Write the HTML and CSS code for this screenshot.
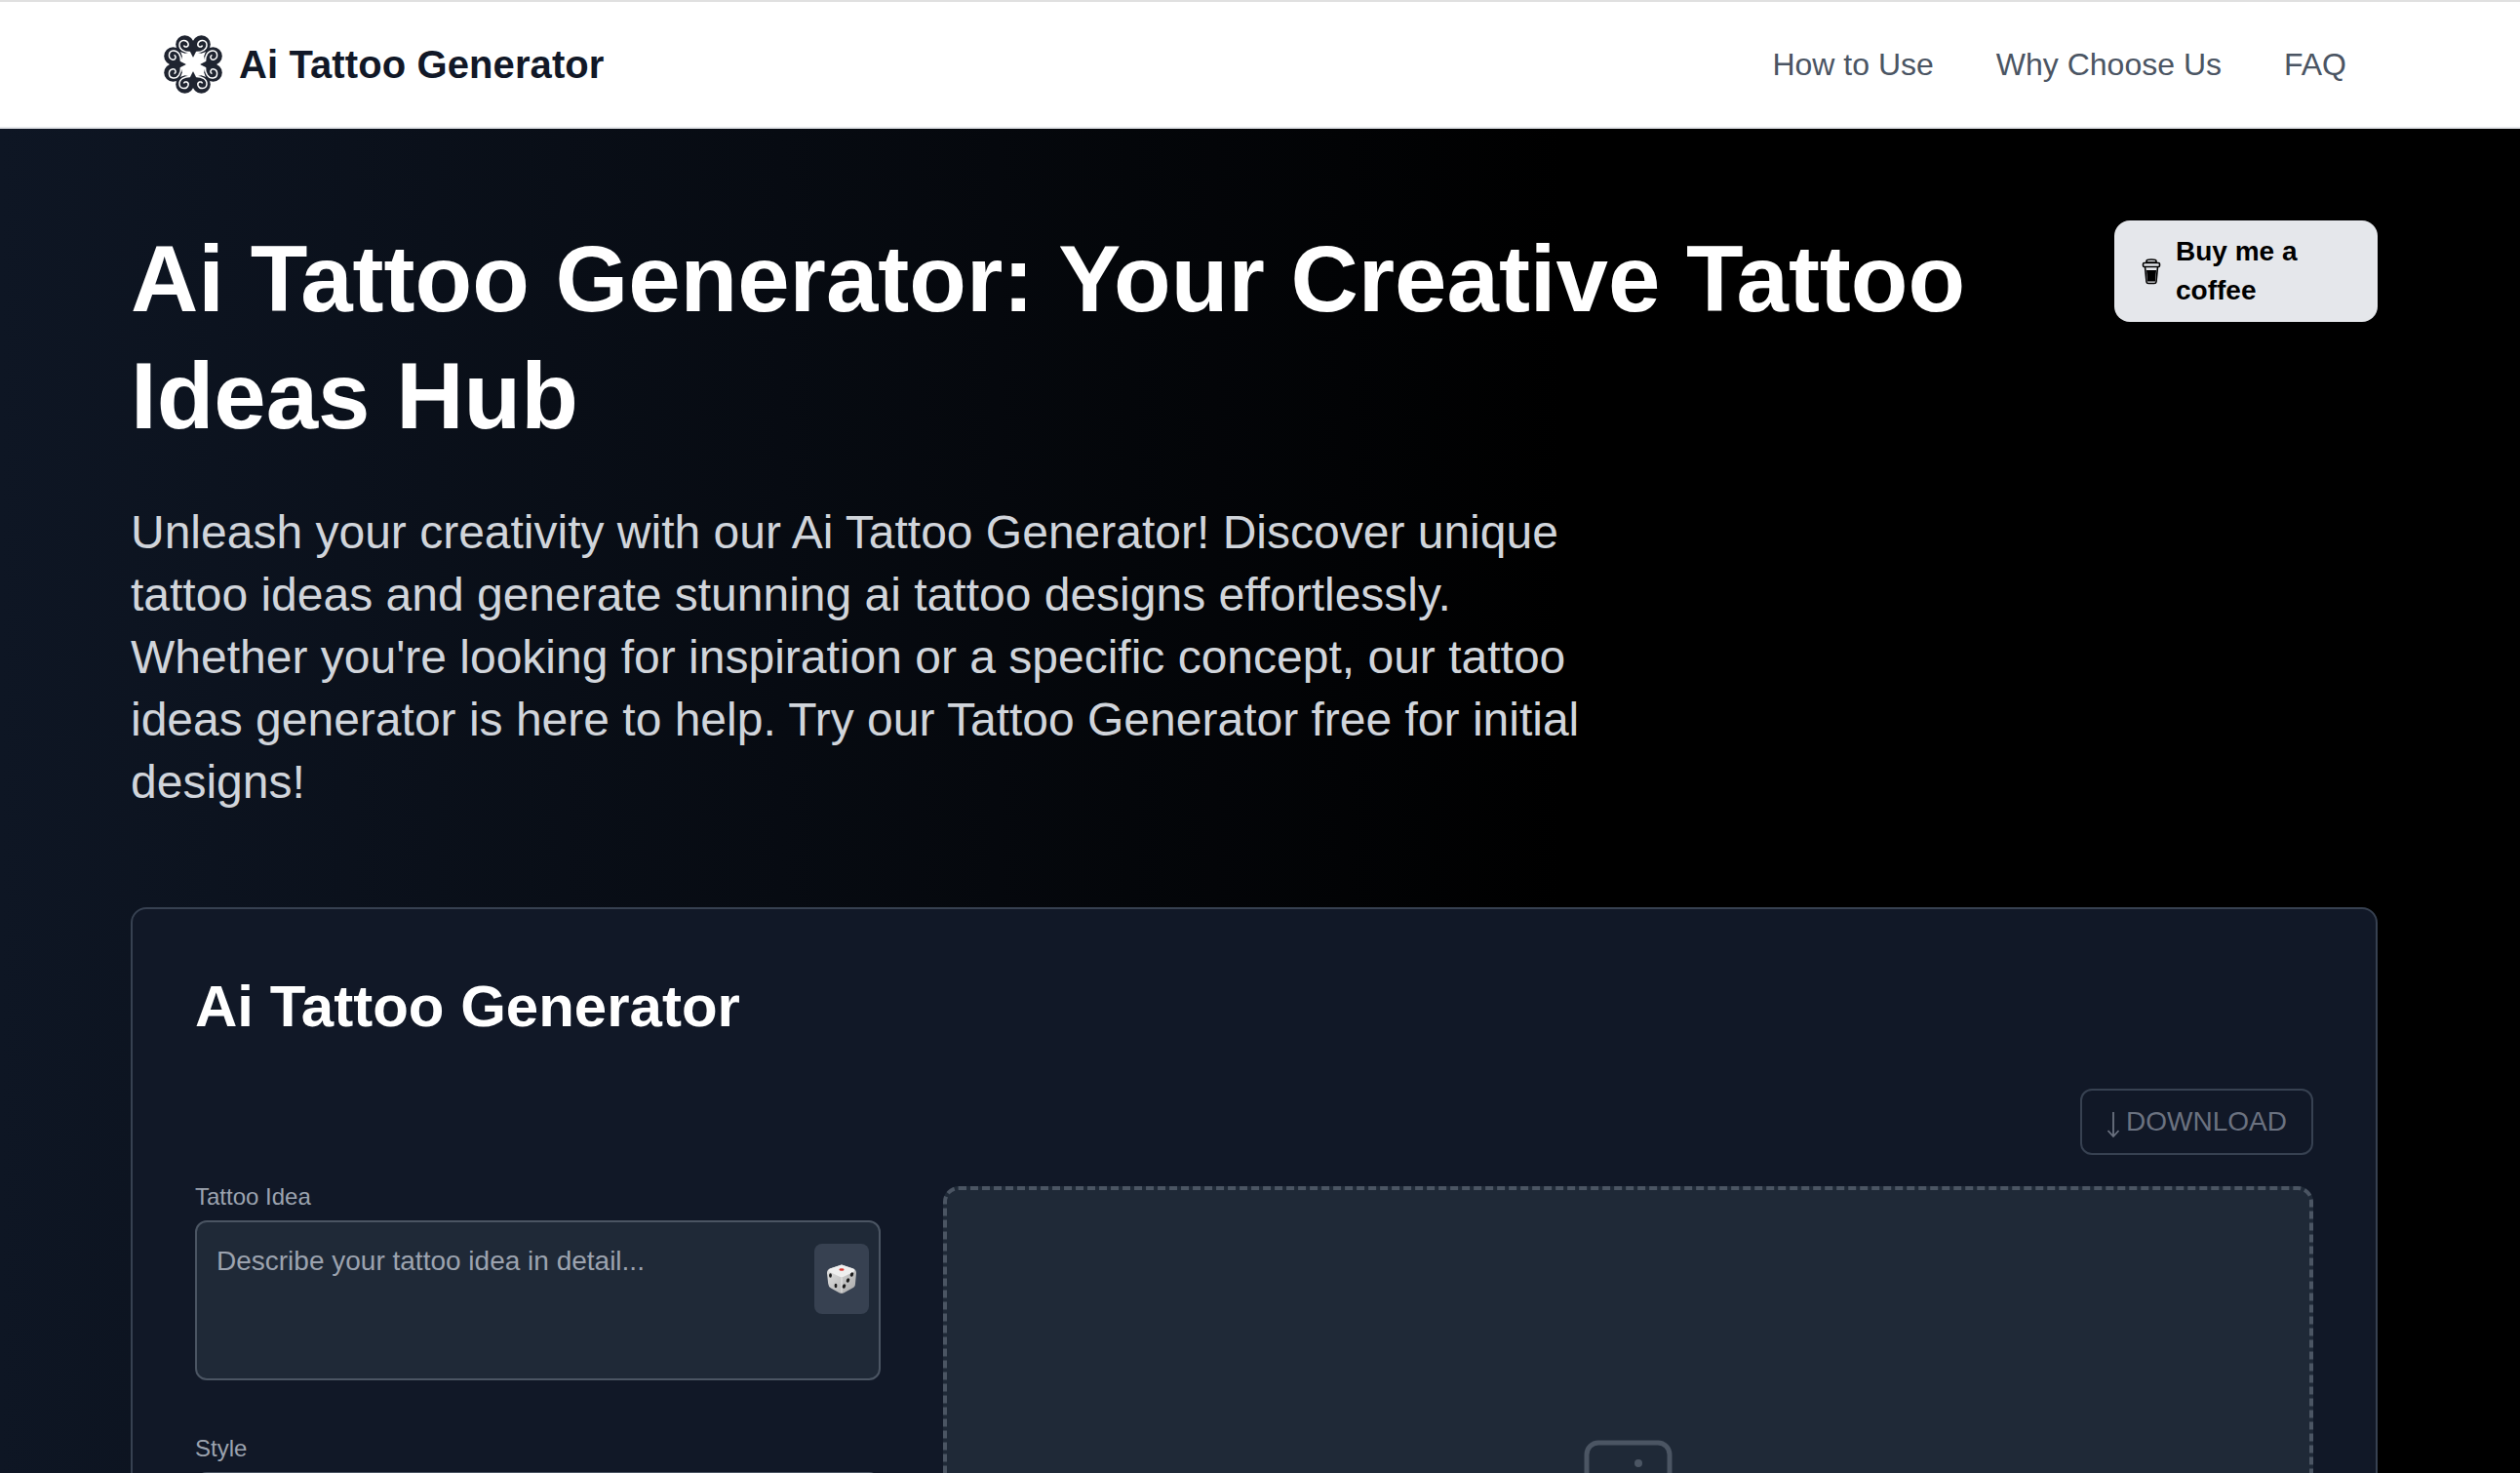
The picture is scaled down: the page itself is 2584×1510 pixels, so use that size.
FILE: index.html
```html
<!DOCTYPE html>
<html lang="en">
<head>
    <meta charset="UTF-8">
    <meta name="viewport" content="width=device-width, initial-scale=1.0">
    <title>Ai Tattoo Generator</title>
    <link rel="stylesheet" href="styles.css">
</head>
<body>

<header class="site-header">
    <div class="brand">
        <svg class="brand-logo" viewBox="0 0 60 60" aria-hidden="true">
            <defs>
                <g id="lobe">
                    <circle cx="21.500" cy="9.500" r="9.300" fill="#1f2430"/>
                    <path d="M28 17.500 C21 18 15.500 14.500 16 9.500 C16.500 4.500 23.500 4 25 8.500 C26 12 21.500 13.500 20.500 10.500" fill="none" stroke="#fff" stroke-width="1.500"/>
                    <path d="M25 13 L30 23 L30 8 Z" fill="#1f2430"/>
                </g>
                <g id="lobe-pair">
                    <use href="#lobe"/>
                    <use href="#lobe" transform="translate(60 0) scale(-1 1)"/>
                </g>
            </defs>
            <use href="#lobe-pair"/>
            <use href="#lobe-pair" transform="rotate(90 30 30)"/>
            <use href="#lobe-pair" transform="rotate(180 30 30)"/>
            <use href="#lobe-pair" transform="rotate(270 30 30)"/>
            <path d="M30 23 L43 17 L37 30 L43 43 L30 37 L17 43 L23 30 L17 17 Z" fill="#fff"/>
        </svg>
        <span class="brand-name">Ai Tattoo Generator</span>
    </div>
    <nav class="site-nav">
        <a href="#how">How to Use</a>
        <a href="#why">Why Choose Us</a>
        <a href="#faq">FAQ</a>
    </nav>
</header>

<main class="hero">
    <div class="hero-top">
        <h1>Ai Tattoo Generator: Your Creative Tattoo Ideas Hub</h1>
        <a class="coffee-button" href="#coffee">
            <svg class="coffee-icon" viewBox="0 0 20 28" aria-hidden="true">
                <path d="M5 3.500 C5 1.500 15 1.500 15 3.500 L15 5 L5 5 Z" fill="none" stroke="#000" stroke-width="1.600"/>
                <rect x="1.500" y="5.500" width="17" height="4" rx="1.200" fill="none" stroke="#000" stroke-width="1.600"/>
                <path d="M3.500 9.500 L5 25 Q5.200 26.500 7 26.500 L13 26.500 Q14.800 26.500 15 25 L16.500 9.500" fill="none" stroke="#000" stroke-width="1.600"/>
                <path d="M5 13 L15 13 L14 24.500 L6 24.500 Z" fill="#000"/>
            </svg>
            <span>Buy me a coffee</span>
        </a>
    </div>

    <p class="lead">Unleash your creativity with our Ai Tattoo Generator! Discover unique tattoo ideas and generate stunning ai tattoo designs effortlessly. Whether you're looking for inspiration or a specific concept, our tattoo ideas generator is here to help. Try our Tattoo Generator free for initial designs!</p>

    <section class="generator-card">
        <h2>Ai Tattoo Generator</h2>
        <div class="download-row">
            <button class="download-button">
                <svg class="download-arrow" viewBox="0 0 14 28" aria-hidden="true">
                    <path d="M7 1 L7 26 M1.500 20 L7 26 L12.500 20" fill="none" stroke="#6b7280" stroke-width="1.800"/>
                </svg>
                DOWNLOAD
            </button>
        </div>
        <div class="generator-grid">
            <div class="form-column">
                <label class="field-label" for="idea">Tattoo Idea</label>
                <div class="idea-box">
                    <textarea id="idea" placeholder="Describe your tattoo idea in detail..."></textarea>
                    <button class="dice-button" aria-label="Random idea">
                        <svg class="dice-icon" viewBox="0 0 30 30" aria-hidden="true">
                            <defs>
                                <linearGradient id="dice-side" x1="0" y1="0" x2="1" y2="1">
                                    <stop offset="0" stop-color="#e4e4e4"/>
                                    <stop offset="1" stop-color="#a9a9a9"/>
                                </linearGradient>
                            </defs>
                            <path d="M15 0.500 L27 4.500 Q30 5.500 30 9 L29 20 Q29 23 26 24.500 L17 29.500 Q15 30.300 13 29.500 L4 24.500 Q1.500 23 1.200 20 L0 9 Q0 5.500 3 4.500 Z" fill="url(#dice-side)"/>
                            <path d="M15 0.500 L27 4.500 Q29.500 6 27 8 L16.500 13 Q15 13.600 13.500 13 L3 8 Q0.500 6 3 4.500 Z" fill="#efefef"/>
                            <path d="M15 13.500 L15 29" stroke="#ffffff" stroke-opacity="0.600" stroke-width="1"/>
                            <ellipse cx="15" cy="5.500" rx="2.600" ry="1.200" fill="#d8342c"/>
                            <ellipse cx="3.500" cy="11.500" rx="1.400" ry="2.200" fill="#1c1c1c"/>
                            <ellipse cx="9" cy="22" rx="1.400" ry="2.200" fill="#1c1c1c"/>
                            <ellipse cx="25.500" cy="10.500" rx="1.600" ry="2.300" transform="rotate(25 25.500 10.500)" fill="#1c1c1c"/>
                            <ellipse cx="21.500" cy="16.500" rx="1.600" ry="2.300" transform="rotate(25 21.500 16.500)" fill="#1c1c1c"/>
                            <ellipse cx="17.500" cy="22.500" rx="1.600" ry="2.300" transform="rotate(25 17.500 22.500)" fill="#1c1c1c"/>
                        </svg>
                    </button>
                </div>
                <label class="field-label style-label" for="style">Style</label>
                <div class="style-select" id="style"></div>
            </div>
            <div class="preview">
                <svg class="preview-icon" viewBox="0 0 92 92" aria-hidden="true">
                    <rect x="3" y="3" width="85" height="85" rx="12" fill="none" stroke="#4b5563" stroke-width="5"/>
                    <circle cx="56" cy="24" r="4" fill="#4b5563"/>
                </svg>
            </div>
        </div>
    </section>
</main>

</body>
</html>
```

FILE: styles.css
```css
* {
    box-sizing: border-box;
}

html, body {
    height: 1510px;
    overflow: hidden;
}

body {
    font-family: "Liberation Sans", Arial, sans-serif;
    margin: 0;
    padding: 0;
    background-color: #000;
}

.site-header {
    height: 132px;
    display: flex;
    align-items: center;
    justify-content: space-between;
    padding: 0 178px 0 168px;
    background-color: #fff;
    border-top: 2px solid #e0e0e0;
    border-bottom: 2px solid #e5e7eb;
}

.brand {
    display: flex;
    align-items: center;
    gap: 17px;
}

.brand-logo {
    width: 60px;
    height: 60px;
}

.brand-name {
    font-size: 40px;
    font-weight: 700;
    letter-spacing: 0.1px;
    color: #111827;
}

.site-nav {
    display: flex;
    gap: 64px;
}

.site-nav a {
    font-size: 32px;
    color: #4b5563;
    text-decoration: none;
}

.hero {
    height: 1378px;
    padding: 80px 146px 0 134px;
    background: linear-gradient(to right, #0e1624 0%, #000 62%);
}

.hero-top {
    display: flex;
    justify-content: space-between;
    align-items: flex-start;
}

h1 {
    margin: 14px 0 0;
    width: 1960px;
    font-size: 96px;
    line-height: 120px;
    font-weight: 700;
    color: #fff;
}

.coffee-button {
    width: 270px;
    height: 104px;
    margin-top: 14px;
    display: flex;
    align-items: center;
    gap: 15px;
    padding: 0 28px;
    background-color: #e5e7eb;
    border-radius: 16px;
    color: #000;
    font-size: 28px;
    line-height: 40px;
    font-weight: 700;
    text-decoration: none;
}

.coffee-icon {
    width: 20px;
    height: 28px;
    flex-shrink: 0;
}

.lead {
    width: 1500px;
    margin: 48px 0 0;
    font-size: 48px;
    line-height: 64px;
    color: #d1d5db;
}

.generator-card {
    margin-top: 96px;
    height: 1000px;
    padding: 64px;
    background-color: #111827;
    border: 2px solid #374151;
    border-radius: 16px;
}

h2 {
    margin: 0;
    font-size: 60px;
    line-height: 72px;
    font-weight: 700;
    color: #fff;
}

.download-row {
    display: flex;
    justify-content: flex-end;
    margin-top: 48px;
}

.download-button {
    height: 68px;
    width: 239px;
    display: flex;
    align-items: center;
    justify-content: center;
    gap: 6px;
    padding: 0;
    background: transparent;
    border: 2px solid #374151;
    border-radius: 12px;
    color: #6b7280;
    font-family: inherit;
    font-size: 28px;
}

.download-arrow {
    width: 14px;
    height: 28px;
    margin-top: 6px;
}

.generator-grid {
    display: grid;
    grid-template-columns: 703px 1fr;
    gap: 64px;
    margin-top: 32px;
}

.form-column {
    margin-top: -5px;
}

.field-label {
    display: block;
    font-size: 24px;
    line-height: 32px;
    color: #9ca3af;
}

.idea-box {
    position: relative;
    margin-top: 8px;
}

.idea-box textarea {
    display: block;
    width: 100%;
    height: 164px;
    padding: 24px 20px;
    background-color: #1f2937;
    border: 2px solid #4b5563;
    border-radius: 12px;
    resize: none;
    font-family: inherit;
    font-size: 28px;
    color: #fff;
}

.idea-box textarea::placeholder {
    color: #9ca3af;
}

.dice-button {
    position: absolute;
    top: 24px;
    right: 12px;
    width: 56px;
    height: 72px;
    padding: 0;
    display: flex;
    align-items: center;
    justify-content: center;
    background-color: #374151;
    border: none;
    border-radius: 8px;
}

.dice-icon {
    width: 30px;
    height: 30px;
}

.style-label {
    margin-top: 54px;
}

.style-select {
    margin-top: 8px;
    height: 72px;
    background-color: #1f2937;
    border: 2px solid #4b5563;
    border-radius: 12px;
}

.preview {
    height: 800px;
    display: flex;
    justify-content: center;
    padding-top: 256px;
    background-color: #1f2937;
    border: 4px dashed #4b5563;
    border-radius: 16px;
}

.preview-icon {
    width: 92px;
    height: 92px;
}
```
